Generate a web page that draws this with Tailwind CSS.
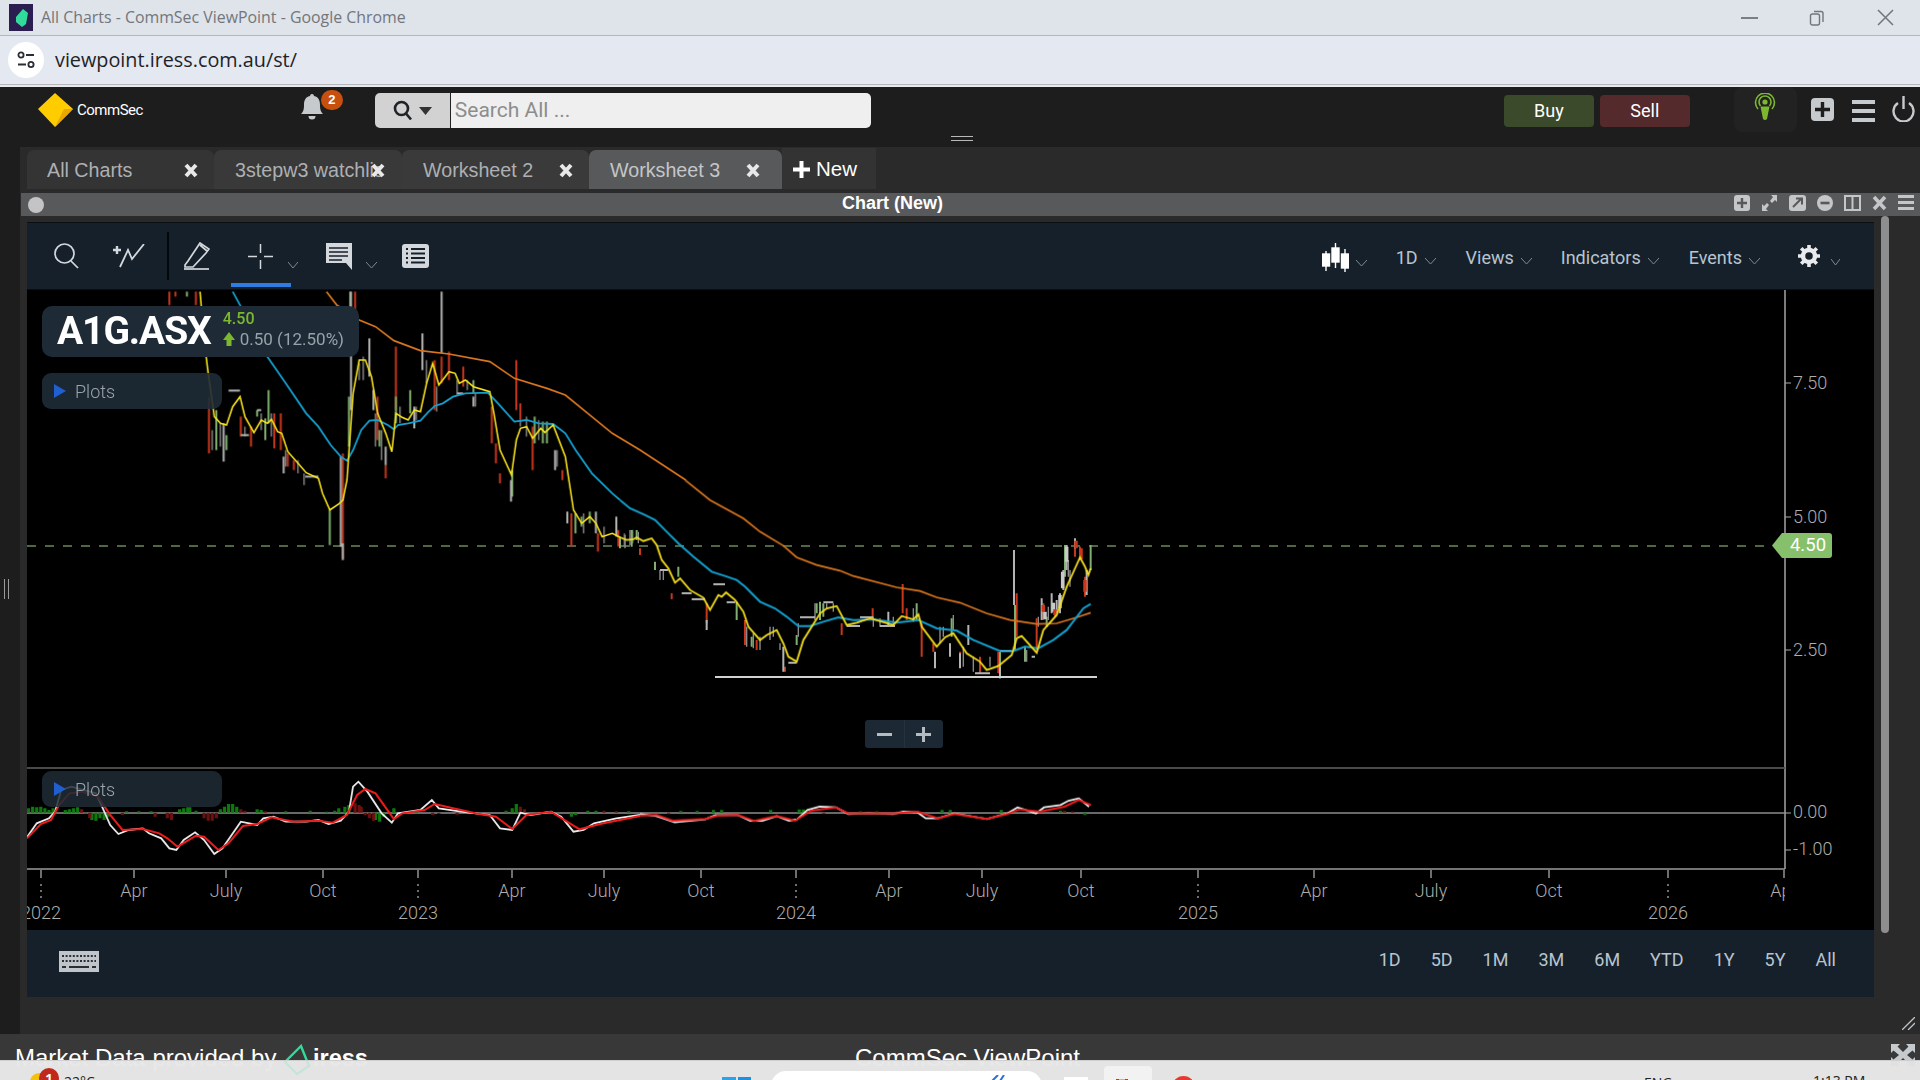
<!DOCTYPE html>
<html>
<head>
<meta charset="utf-8">
<script src="https://cdn.jsdelivr.net/npm/@tailwindcss/browser@4"></script>
</head>
<body class="bg-[#e4e4e4]">
<div class="w-[1920px] h-[1080px] overflow-hidden flex flex-col relative font-['Liberation_Sans',sans-serif]">

  <!-- Browser title bar -->
  <div class="h-[36px] shrink-0 bg-[#dfe3ea] border-b border-[#b4b6ba] flex items-center relative">
    <div class="ml-[9px] w-[24px] h-[27px] bg-[#2b1d4f] flex items-center justify-center">
      <svg width="16" height="20" viewBox="0 0 16 20"><path d="M10 1 L15 5 L13 16 L9 19 L3 14 L3 9 Z" fill="#2fdc9c"/></svg>
    </div>
    <span class="ml-[8px] text-[#72767c] text-[15.9px] font-['Open_Sans',sans-serif]">All Charts - CommSec ViewPoint - Google Chrome</span>
    <div class="ml-auto flex items-center">
      <div class="w-[17px] h-[2px] bg-[#7b7f85] mr-[51px]"></div>
      <svg class="mr-[52px]" width="16" height="16" viewBox="0 0 16 16" fill="none" stroke="#72767c" stroke-width="1.4"><rect x="1.5" y="4" width="9" height="11" rx="2"/><path d="M5 1.5 H12 a2 2 0 0 1 2 2 V12"/></svg>
      <svg class="mr-[26px]" width="17" height="17" viewBox="0 0 17 17" stroke="#72767c" stroke-width="1.5"><path d="M1 1 L16 16 M16 1 L1 16"/></svg>
    </div>
  </div>

  <!-- Address bar -->
  <div class="h-[48px] shrink-0 bg-[#e3e8f1] flex items-center">
    <div class="ml-[8px] w-[36px] h-[36px] rounded-full bg-white flex items-center justify-center">
      <svg width="20" height="20" viewBox="0 0 20 20" fill="none" stroke="#2a2d33" stroke-width="1.8"><circle cx="5" cy="5" r="2.6"/><path d="M10 5 H18 M2 14.5 H10"/><circle cx="15" cy="14.5" r="2.6"/></svg>
    </div>
    <span class="ml-[11px] text-[#1f2226] text-[19.8px] font-['Open_Sans',sans-serif]">viewpoint.iress.com.au/st/</span>
  </div>
  <div class="h-[3px] shrink-0 bg-[#e6e9ee] border-t border-[#b4b6ba]"></div>

  <!-- App header -->
  <div class="h-[60px] shrink-0 bg-[#1e1d1e] flex items-start relative">
    <svg class="ml-[38px] mt-[6px]" width="35" height="34" viewBox="0 0 35 34"><path d="M17 0 L35 16 L17 34 L0 16 Z" fill="#ffcc00"/><path d="M17 34 L35 16 L26 16 Z" fill="#e8a800"/></svg>
    <span class="ml-[4px] mt-[14px] text-white text-[15px] leading-[18px] font-['Roboto',sans-serif] tracking-[-0.5px]">CommSec</span>
    <div class="relative ml-[158px] mt-[7px] w-[20px] h-[26px]">
      <svg width="22" height="26" viewBox="0 0 22 26" fill="#c6cacd"><path d="M11 0 a2 2 0 0 1 2 2 c5 1 6 5 6 9 c0 5 1 7 3 9 H0 c2-2 3-4 3-9 c0-4 1-8 6-9 a2 2 0 0 1 2-2 Z"/><path d="M7.5 22 a3.5 3.5 0 0 0 7 0 Z"/></svg>
      <span class="absolute left-[20px] top-[-4px] w-[22px] h-[20px] rounded-full bg-[#c8500f] text-white text-[13px] leading-[20px] font-bold text-center">2</span>
    </div>
    <div class="ml-[54px] mt-[6px] w-[496px] h-[35px] flex rounded-[5px] overflow-hidden">
      <div class="w-[76px] bg-[#d2d2d2] border-r border-[#222] flex items-center justify-center gap-[6px]">
        <svg width="20" height="21" viewBox="0 0 20 21" fill="none" stroke="#1f2226" stroke-width="2.6"><circle cx="8.5" cy="8.5" r="6.5"/><path d="M13 13.5 L18 19.5"/></svg>
        <svg width="13" height="8" viewBox="0 0 13 8"><path d="M0 0 H13 L6.5 8 Z" fill="#333"/></svg>
      </div>
      <div class="flex-1 bg-[#efefef] pl-[4px] flex items-center text-[#8d8d8d] text-[21px] font-['Roboto',sans-serif]">Search All ...</div>
    </div>
    <div class="ml-[633px] mt-[8px] w-[90px] h-[32px] rounded-[4px] bg-[#3a4a2a] text-white text-[18px] leading-[31px] text-center font-['Roboto',sans-serif]">Buy</div>
    <div class="ml-[6px] mt-[8px] w-[90px] h-[32px] rounded-[4px] bg-[#542a2c] text-white text-[18px] leading-[31px] text-center font-['Roboto',sans-serif]">Sell</div>
    <div class="ml-[44px] w-[63px] h-[45px] bg-[#222222] rounded-[8px] flex items-start justify-center">
      <svg class="mt-[6px]" width="22" height="28" viewBox="0 0 22 28" fill="none" stroke="#7cb82f" stroke-width="1.6"><path d="M4 16 a9.5 9.5 0 1 1 14 0"/><path d="M6.5 13 a6 6 0 1 1 9 0"/><circle cx="11" cy="9" r="2.6" fill="#7cb82f" stroke="none"/><path d="M6.5 13.5 H15.5 L13 26 Q11 28 9 26 Z" fill="#7cb82f" stroke="none"/></svg>
    </div>
    <svg class="ml-[14px] mt-[11px]" width="23" height="23" viewBox="0 0 23 23"><rect width="23" height="23" rx="4" fill="#c6cacd"/><path d="M11.5 4 V19 M4 11.5 H19" stroke="#1e1d1e" stroke-width="3.4"/></svg>
    <div class="ml-[18px] mt-[13px] w-[23px] flex flex-col gap-[5px]"><div class="h-[4px] bg-[#c6cacd]"></div><div class="h-[4px] bg-[#c6cacd]"></div><div class="h-[4px] bg-[#c6cacd]"></div></div>
    <svg class="ml-[17px] mt-[9px]" width="23" height="26" viewBox="0 0 23 26" fill="none" stroke="#c6cacd" stroke-width="2.4"><path d="M6 7 a10 10 0 1 0 11 0"/><path d="M11.5 0 V13"/></svg>
    <div class="absolute left-[951px] top-[49px] w-[22px] h-[5px] border-y border-[#b9b9b9]"></div>
  </div>

  <!-- Main -->
  <div class="h-[887px] shrink-0 flex">
    <div class="w-[20px] bg-[#1e1d1e] flex items-center justify-start pl-[4px]">
      <div class="w-[5px] h-[20px] border-x border-[#9a9a9a] mb-[4px]"></div>
    </div>
    <div class="flex-1 bg-[#2a2a2a] flex flex-col">
      <!-- Tabs -->
      <div class="h-[42px] shrink-0 flex items-end pl-[7px] text-[#adb0b3] text-[19.7px]">
        <div class="w-[187px] h-[39px] rounded-t-[7px] bg-[#343434] flex items-center pl-[20px] pt-[2px] relative">All Charts
          <svg class="absolute left-[157px] top-[13px]" width="14" height="15" viewBox="0 0 14 15"><path d="M2 2 L12 13 M12 2 L2 13" stroke="#e8e8e8" stroke-width="4"/></svg></div>
        <div class="w-[188px] h-[39px] rounded-t-[7px] bg-[#393939] flex items-center pl-[21px] pt-[2px] relative">
          <span class="w-[146px] overflow-hidden whitespace-nowrap">3stepw3 watchlist</span>
          <svg class="absolute left-[157px] top-[13px]" width="14" height="15" viewBox="0 0 14 15"><path d="M2 2 L12 13 M12 2 L2 13" stroke="#e8e8e8" stroke-width="4"/></svg></div>
        <div class="w-[187px] h-[39px] rounded-t-[7px] bg-[#3a3a3a] flex items-center pl-[21px] pt-[2px] relative">Worksheet 2
          <svg class="absolute left-[157px] top-[13px]" width="14" height="15" viewBox="0 0 14 15"><path d="M2 2 L12 13 M12 2 L2 13" stroke="#e8e8e8" stroke-width="4"/></svg></div>
        <div class="w-[193px] h-[39px] rounded-t-[7px] bg-[#58595b] flex items-center pl-[21px] pt-[2px] relative text-[#c4c6c8]">Worksheet 3
          <svg class="absolute left-[157px] top-[13px]" width="14" height="15" viewBox="0 0 14 15"><path d="M2 2 L12 13 M12 2 L2 13" stroke="#e8e8e8" stroke-width="4"/></svg></div>
        <div class="w-[94px] h-[41px] bg-[#333] flex items-center pl-[11px] pt-[2px] text-white text-[20.5px] gap-[6px]">
          <svg width="17" height="17" viewBox="0 0 17 17"><path d="M8.5 0 V17 M0 8.5 H17" stroke="#fff" stroke-width="4"/></svg>New</div>
      </div>
      <!-- Title bar -->
      <div class="h-[23px] shrink-0 mt-[4px] ml-[1px] bg-[#58595b] flex items-center relative">
        <div class="ml-[7px] w-[16px] h-[16px] rounded-full bg-[#c4c4c4]"></div>
        <span class="ml-[798px] text-white font-bold text-[18px] mb-[3px]">Chart (New)</span>
        <div class="ml-auto mb-[4px] mr-[6px] flex items-center gap-[11px]">
          <svg width="16" height="16" viewBox="0 0 16 16"><rect width="16" height="16" rx="3" fill="#c4c6c8"/><path d="M8 3 V13 M3 8 H13" stroke="#58595b" stroke-width="2.4"/></svg>
          <svg width="17" height="16" viewBox="0 0 17 16" fill="#c4c6c8"><path d="M16 0 H10 L12 2 L9 6 L11 8 L14 5 L16 7 Z M1 16 H7 L5 14 L8 10 L6 8 L3 11 L1 9 Z"/></svg>
          <svg width="17" height="16" viewBox="0 0 17 16"><rect width="17" height="16" rx="3" fill="#c4c6c8"/><path d="M4 12 L12 4 M7 3.5 H13 V9.5" stroke="#58595b" stroke-width="2" fill="none"/></svg>
          <svg width="16" height="16" viewBox="0 0 16 16"><circle cx="8" cy="8" r="8" fill="#c4c6c8"/><path d="M3.5 8 H12.5" stroke="#58595b" stroke-width="2.6"/></svg>
          <svg width="17" height="16" viewBox="0 0 17 16" fill="none" stroke="#c4c6c8" stroke-width="2"><rect x="1" y="1" width="15" height="14"/><path d="M8.5 1 V15"/></svg>
          <svg width="15" height="16" viewBox="0 0 15 16"><path d="M2 2 L13 14 M13 2 L2 14" stroke="#c4c6c8" stroke-width="3.6"/></svg>
          <div class="w-[16px] flex flex-col gap-[3px]"><div class="h-[3px] bg-[#c4c6c8]"></div><div class="h-[3px] bg-[#c4c6c8]"></div><div class="h-[3px] bg-[#c4c6c8]"></div></div>
        </div>
      </div>

      <!-- Chart widget + scrollbar -->
      <div class="flex-1 flex relative">
        <div class="ml-[7px] mt-[6px] w-[1847px] flex flex-col">
          <!-- Toolbar -->
          <div class="h-[68px] shrink-0 bg-[#16202a] border-y border-[#0a0f14] flex items-center justify-between text-[#b8c4d0] text-[18px] font-['Roboto',sans-serif] relative">
            <div class="flex items-center">
              <svg class="ml-[27px]" width="25" height="26" viewBox="0 0 25 26" fill="none" stroke="#d4d8dc" stroke-width="1.7"><circle cx="10.5" cy="10.5" r="9.5"/><path d="M17 18 L24 25"/></svg>
              <svg class="ml-[34px]" width="32" height="24" viewBox="0 0 32 24" fill="none" stroke="#d4d8dc" stroke-width="1.8"><path d="M0 6 H8 M4 2 V10" stroke-width="2.4"/><path d="M7 23 L15 6 L19 15 L31 0"/></svg>
              <div class="ml-[22px] w-[1.5px] h-[48px] bg-[#05080b]"></div>
              <svg class="ml-[15px]" width="26" height="28" viewBox="0 0 26 28" fill="none" stroke="#d4d8dc" stroke-width="1.7"><path d="M1 23 L4 19 L16 1 L25 7 L22 11 L9 25 L1 25 Z M16 3 L23 9"/><path d="M0 27 H25"/></svg>
              <svg class="ml-[38px]" width="25" height="25" viewBox="0 0 25 25" stroke="#d4d8dc" stroke-width="1.5"><path d="M12.5 0 V9 M12.5 16 V25 M0 12.5 H9 M16 12.5 H25"/></svg>
              <svg class="ml-[15px] mt-[18px]" width="10" height="6" viewBox="0 0 10 6" fill="none" stroke="#7d8a96" stroke-width="1"><path d="M0 0 L5 6 L10 0"/></svg>
              <svg class="ml-[28px]" width="26" height="27" viewBox="0 0 26 27"><path d="M0 0 H26 V20 L26 27 L20 20 H0 Z" fill="#d4d8dc"/><path d="M3 5 H22 M3 9 H22 M3 13 H22 M3 17 H16" stroke="#16202a" stroke-width="1.4"/></svg>
              <svg class="ml-[14px] mt-[18px]" width="11" height="6" viewBox="0 0 11 6" fill="none" stroke="#7d8a96" stroke-width="1"><path d="M0 0 L5.5 6 L11 0"/></svg>
              <svg class="ml-[25px]" width="27" height="24" viewBox="0 0 27 24"><rect width="27" height="24" rx="3" fill="#d4d8dc"/><path d="M4 5 H6 M9 5 H23 M4 9.5 H6 M9 9.5 H23 M4 14 H6 M9 14 H23 M4 18.5 H6 M9 18.5 H23" stroke="#16202a" stroke-width="1.8"/></svg>
            </div>
            <div class="absolute left-[204px] bottom-[2px] w-[60px] h-[4px] bg-[#2f7de1]"></div>
            <div class="flex items-center pr-[34px] pt-[2px]">
              <svg width="27" height="29" viewBox="0 0 27 29" stroke="#fff" stroke-width="1.4" fill="#fff"><path d="M4 8 V28 M13.5 0 V25 M23 6 V29" fill="none"/><rect x="0.5" y="11" width="7" height="12"/><rect x="10" y="5" width="7" height="14"/><rect x="19.5" y="11" width="7" height="14"/></svg>
              <svg class="ml-[7px] mt-[12px]" width="11" height="6" viewBox="0 0 11 6" fill="none" stroke="#7d8a96" stroke-width="1"><path d="M0 0 L5.5 6 L11 0"/></svg>
              <span class="ml-[29px]">1D</span>
              <svg class="ml-[7px] mt-[8px]" width="11" height="6" viewBox="0 0 11 6" fill="none" stroke="#7d8a96" stroke-width="1"><path d="M0 0 L5.5 6 L11 0"/></svg>
              <span class="ml-[30px]">Views</span>
              <svg class="ml-[7px] mt-[8px]" width="11" height="6" viewBox="0 0 11 6" fill="none" stroke="#7d8a96" stroke-width="1"><path d="M0 0 L5.5 6 L11 0"/></svg>
              <span class="ml-[29px]">Indicators</span>
              <svg class="ml-[7px] mt-[8px]" width="11" height="6" viewBox="0 0 11 6" fill="none" stroke="#7d8a96" stroke-width="1"><path d="M0 0 L5.5 6 L11 0"/></svg>
              <span class="ml-[30px]">Events</span>
              <svg class="ml-[7px] mt-[8px]" width="11" height="6" viewBox="0 0 11 6" fill="none" stroke="#7d8a96" stroke-width="1"><path d="M0 0 L5.5 6 L11 0"/></svg>
              <svg class="ml-[38px] mb-[3px]" width="22" height="22" viewBox="0 0 22 22" fill="none"><circle cx="11" cy="11" r="6" stroke="#e8eaec" stroke-width="4.5"/><path d="M11 0 V4 M11 18 V22 M0 11 H4 M18 11 H22 M3.2 3.2 L6 6 M16 16 L18.8 18.8 M18.8 3.2 L16 6 M6 16 L3.2 18.8" stroke="#e8eaec" stroke-width="3.6"/></svg>
              <svg class="ml-[11px] mt-[10px]" width="9" height="6" viewBox="0 0 9 6" fill="none" stroke="#7d8a96" stroke-width="1"><path d="M0 0 L4.5 6 L9 0"/></svg>
            </div>
          </div>

          <!-- Chart canvas -->
          <div class="h-[640px] shrink-0 bg-black relative overflow-hidden">
            <svg class="absolute inset-0" width="1847" height="640" viewBox="27 290 1847 640" fill="none">
              <defs><clipPath id="plot"><rect x="27" y="290" width="1758" height="640"/></clipPath></defs>

              <!-- Frame and axes -->
              <g class="font-['Roboto',sans-serif] font-light" font-size="18" fill="#adadad">
                <path d="M1785 290 V869 M27 869 H1785 M27 768 H1785" stroke="#9a9a9a" stroke-width="1.6"/>
                <path d="M27 768 H1785" stroke="#3c3c3c" stroke-width="1.6"/>
                <path d="M27 813 H1785" stroke="#8d8d8d" stroke-width="1.6"/>
                <path d="M1785 383 h6 M1785 517 h6 M1785 650 h6 M1785 813 h6 M1785 850 h6" stroke="#aaa" stroke-width="1.2"/>
                <path d="M41 870 v8 M134 870 v8 M226 870 v8 M323 870 v8 M418 870 v8 M512 870 v8 M604 870 v8 M701 870 v8 M796 870 v8 M889 870 v8 M982 870 v8 M1081 870 v8 M1198 870 v8 M1314 870 v8 M1431 870 v8 M1549 870 v8 M1668 870 v8 M1784 870 v8" stroke="#aaa" stroke-width="1.3"/>
                <path d="M41 884 v14 M418 884 v14 M796 884 v14 M1198 884 v14 M1668 884 v14" stroke="#aaa" stroke-width="1.3" stroke-dasharray="2 4"/>
                <text x="1793" y="389" stroke="none">7.50</text>
                <text x="1793" y="523" stroke="none">5.00</text>
                <text x="1793" y="656" stroke="none">2.50</text>
                <text x="1793" y="818" stroke="none">0.00</text>
                <text x="1793" y="855" stroke="none">-1.00</text>
                <g text-anchor="middle" stroke="none" clip-path="url(#plot)">
                  <text x="134" y="897">Apr</text><text x="226" y="897">July</text><text x="323" y="897">Oct</text>
                  <text x="512" y="897">Apr</text><text x="604" y="897">July</text><text x="701" y="897">Oct</text>
                  <text x="889" y="897">Apr</text><text x="982" y="897">July</text><text x="1081" y="897">Oct</text>
                  <text x="1314" y="897">Apr</text><text x="1431" y="897">July</text><text x="1549" y="897">Oct</text><text x="1784" y="897">Apr</text>
                  <text x="41" y="919">2022</text><text x="418" y="919">2023</text><text x="796" y="919">2024</text><text x="1198" y="919">2025</text><text x="1668" y="919">2026</text>
                </g>
              </g>

              <!-- Last price dashed line -->
              <path d="M27 546 H1772" stroke="#6b8a55" stroke-width="1.5" stroke-dasharray="9 9"/>

              <g class="blur-[0.4px]" stroke-width="1.5">
                <!-- Candles, left part -->
                <g transform="translate(0,280) scale(.40816,.33333)">
                  <path vector-effect="non-scaling-stroke" stroke="#8a8a8a" stroke-width="1.4" d="M520 450V510M540 430V500M600 440V470M640 400V450M665 400V470M700 510V560M730 540V580M745 580V615M890 230V300M880 250V300M920 400V500M935 450V540M980 380V430M1020 380V420M1045 240V310M1070 320V395M1120 300V345M1145 300V330M1165 340V380M1275 420V440M1290 410V470M1320 420V480M1365 510V560M1430 700V760M1480 740V790M1530 760V800M1550 750V790"/>
                  <path vector-effect="non-scaling-stroke" stroke="#c8371c" stroke-width="2" d="M415 35V75M430 35V50M480 35V75M870 35V90M512 350V520M590 410V470M615 440V500M672 400V505M688 400V510M705 520V560M720 540V570M840 520V835M925 350V480M945 555V595M970 200V390M1065 240V390M1082 230V310M1100 215V300M1135 260V320M1205 380V490M1215 490V550M1225 580V610M1265 240V390M1275 370V420M1305 440V570M1378 570V600M1400 700V800M1465 760V815M1515 750V800"/>
                  <path vector-effect="non-scaling-stroke" stroke="#7fae6e" stroke-width="2" d="M458 35V50M530 390V510M555 465V510M630 390V410M650 415V480M658 330V430M808 690V795M858 35V230M855 350V500M930 450V500M970 350V430M1005 330V400M1160 300V340M1255 570V650M1340 425V490M1310 410V490M1330 425V490M1410 700V760M1425 710V740M1445 695V730"/>
                  <path vector-effect="non-scaling-stroke" stroke="#b4b4b4" stroke-width="2" d="M1082 35V220M548 430V545M695 530V580M860 35V390M835 530V800M840 790V840M905 175V290M1035 160V270M945 500V555M915 330V390M1015 380V445M1160 350V380M1252 600V665M1360 510V570M1390 695V730M1460 695V760M1510 710V770M560 332H588M748 590H780M630 390H640M590 465H610M1120 340H1135"/>
                </g>
                <!-- Candles, right part -->
                <g transform="translate(620,480) scale(.33333)">
                  <path vector-effect="non-scaling-stroke" stroke="#8a8a8a" stroke-width="1.4" d="M15 165V205M30 150V195M55 155V190M120 270V300M130 270V300M380 440V500M400 460V505M420 470V510M450 440V480M460 440V470M480 490V510M535 430V470M585 370V420M620 370V385M640 370V395M760 410V440M780 415V440M820 410V440M880 385V425M960 440V490M970 440V470M1000 405V450M1030 500V560M1060 530V575M1110 530V560M1220 510V545M1255 410V440M1285 380V420M1345 240V290M1350 270V320"/>
                  <path vector-effect="non-scaling-stroke" stroke="#c8371c" stroke-width="2" d="M848 312V400M1190 340V470M905 430V530M1270 370V420M1305 390V410M1250 415V510M940 490V515M375 420V495M410 480V510M260 370V430M155 340V358M60 205V225M495 560V575M665 430V465M758 385V420M860 385V420M1020 515V535M1080 530V580M1135 515V580M1395 290V350M1380 200V240M1365 180V230"/>
                  <path vector-effect="non-scaling-stroke" stroke="#7fae6e" stroke-width="2" d="M1185 375V510M105 245V270M175 260V290M350 365V420M395 470V500M530 465V495M590 370V400M600 365V420M610 370V410M890 370V420M995 415V470M1140 515V595M1412 195V270M1335 195V290M1280 410V440M1215 500V545M35 150V200M50 150V180M0 170V205"/>
                  <path vector-effect="non-scaling-stroke" stroke="#b4b4b4" stroke-width="2" d="M1182 210V375M1045 435V495M990 490V530M945 515V565M1020 520V565M1140 560V595M1330 270V330M1340 195V270M1365 175V205M1295 340V400M1265 355V420M490 500V575M260 420V450M805 395V440M1400 270V345M1320 340V400M1310 360V400M280 313H315M185 340H215M215 358H255M320 367H345M505 548H530M540 412H585M610 367H640M680 438H720M720 412H760M780 438H825M1140 513H1175M1235 530H1245M120 270H145M1065 580H1110"/>
                  <path vector-effect="non-scaling-stroke" stroke="#c9c9c9" stroke-width="3.5" d="M1328 275V325M1340 200V245M1300 368V395M1275 395V418M1320 345V385"/>
                  <path vector-effect="non-scaling-stroke" stroke="#c8371c" stroke-width="3.5" d="M1368 182V205M1395 300V335M1305 388V405M1383 205V238M1270 375V395"/>
                </g>
                <!-- Moving averages -->
                <path d="M715 677 H1097" stroke="#d2d2d2" stroke-width="2.2" />
                <g transform="translate(0,280) scale(.40816,.33333)">
                  <path vector-effect="non-scaling-stroke" stroke="#d9761f" stroke-width="1.7" d="M800 35L825 75L880 120L920 140L965 182L1030 212L1100 222L1200 245L1260 295L1340 325L1385 345L1440 400L1500 460L1568 510L1680 600"/>
                  <path vector-effect="non-scaling-stroke" stroke="#14a0cf" stroke-width="1.8" d="M570 35L590 80L655 230L700 310L750 400L780 440L810 495L835 530L850 542L865 510L885 450L905 422L925 420L950 435L965 448L975 435L1000 430L1030 422L1050 395L1065 378L1085 370L1110 350L1140 340L1195 338L1220 370L1260 425L1290 420L1320 430L1355 432L1385 460L1410 510L1450 580L1500 640L1519 660"/>
                  <path vector-effect="non-scaling-stroke" stroke="#f5e01c" stroke-width="1.6" d="M490 35L500 180L510 280L525 410L540 430L555 435L570 380L588 350L600 410L622 458L640 420L655 430L665 418L680 455L690 460L705 515L730 550L750 578L780 595L790 640L808 690L830 672L840 660L850 600L865 340L880 240L895 240L910 290L925 400L945 460L960 515L970 400L985 412L1000 420L1015 390L1030 395L1045 310L1060 250L1075 315L1100 275L1115 280L1125 310L1140 300L1160 320L1200 335L1210 400L1225 510L1253 585L1265 480L1275 445L1290 440L1305 475L1325 445L1335 458L1355 435L1385 530L1405 690L1425 730L1445 710L1460 730L1475 770L1500 760L1519 772"/>
                </g>
                <g transform="translate(620,480) scale(.33333)">
                  <path vector-effect="non-scaling-stroke" stroke="#d9761f" stroke-width="1.7" d="M195 0L270 60L370 115L420 155L490 197L530 232L590 255L660 272L700 288L830 322L900 333L950 352L1020 368L1100 400L1170 420L1250 432L1310 430L1370 412L1412 398"/>
                  <path vector-effect="non-scaling-stroke" stroke="#14a0cf" stroke-width="2" d="M0 60L30 85L75 105L105 120L140 155L175 190L220 230L275 275L315 288L350 300L375 320L420 365L465 385L500 410L535 438L570 438L610 425L655 412L700 420L760 418L830 428L895 420L950 445L1010 452L1060 480L1140 513L1180 513L1215 500L1255 505L1300 480L1340 450L1390 385L1412 372"/>
                  <path vector-effect="non-scaling-stroke" stroke="#f5e01c" stroke-width="1.8" d="M0 172L20 180L40 178L50 172L70 183L95 175L110 195L125 240L145 265L165 308L180 295L210 330L250 353L270 390L295 345L305 350L318 337L345 360L370 395L385 440L420 480L440 465L470 450L490 490L505 530L530 545L550 480L600 400L620 385L650 378L680 435L710 428L750 415L820 435L845 408L880 418L895 403L905 440L950 500L975 472L1000 460L1040 520L1080 545L1100 570L1135 558L1175 525L1190 475L1205 468L1250 518L1270 450L1310 405L1340 320L1365 265L1380 232L1395 260L1405 285L1412 265"/>
                </g>

                <!-- Oscillator -->
                <g transform="translate(0,750) scale(.40816,.33333)">
                  <path vector-effect="non-scaling-stroke" stroke="#0d7a0d" stroke-width="3.2" d="M70 188V175M80 188V170M90 188V172M100 188V170M110 188V175M120 188V180M130 188V175M160 188V180M170 188V178M180 188V175M190 188V172M225 188V210M235 188V212M245 188V205M255 188V210M265 188V200M310 188V184M340 188V184M370 188V184M440 188V178M450 188V175M460 188V172M465 188V172M480 188V182M540 188V178M550 188V170M560 188V162M570 188V162M580 188V170M630 188V178M640 188V180M700 188V184M760 188V182M800 188V185M820 188V182M830 188V175M845 188V170M855 188V165M920 188V210M930 188V215M940 188V200M965 188V175M1020 188V184M1265 188V162M1255 188V175M1240 188V182M1340 188V184M1440 188V182M1460 188V182M1400 188V200M1410 188V195M1540 188V184"/>
                  <path vector-effect="non-scaling-stroke" stroke="#6d1010" stroke-width="3.2" d="M200 188V178M210 188V190M220 188V205M300 188V195M380 188V200M410 188V205M420 188V210M500 188V205M510 188V212M520 188V212M530 188V205M590 188V178M600 188V182M650 188V184M870 188V160M880 188V165M885 188V170M895 188V195M905 188V205M915 188V212M1060 188V195M1075 188V192M1120 188V194M1275 188V170M1285 188V178M1480 188V182M1510 188V184"/>
                  <path vector-effect="non-scaling-stroke" stroke="#ececec" stroke-width="1.8" d="M66 262L90 220L120 205L135 185L150 120L175 110L235 130L250 170L270 225L290 252L315 240L350 235L365 250L395 265L415 295L432 300L450 270L478 247L500 270L525 312L545 295L590 215L630 225L645 205L670 200L700 215L750 215L780 210L805 222L835 212L855 185L865 110L878 95L900 125L935 190L960 218L975 190L1030 180L1058 150L1075 175L1130 185L1200 195L1225 235L1255 240L1275 188L1300 195L1350 185L1375 200L1405 245L1430 240L1455 220L1510 205L1568 195"/>
                  <path vector-effect="non-scaling-stroke" stroke="#ee1c1c" stroke-width="2" d="M66 265L100 222L125 210L145 165L170 130L200 125L240 140L270 195L300 240L350 237L390 250L410 265L435 290L480 257L500 260L535 300L560 280L595 228L630 222L665 202L720 215L780 212L815 218L850 195L875 135L895 117L920 130L965 207L985 190L1040 180L1065 162L1110 175L1165 190L1215 200L1255 237L1290 195L1350 185L1420 238L1470 222L1568 198"/>
                </g>
                <g transform="translate(640,750) scale(.40816,.33333)">
                  <path vector-effect="non-scaling-stroke" stroke="#0d7a0d" stroke-width="3.2" d="M100 188V183M140 188V183M180 188V180M200 188V180M320 188V180M390 188V178M400 188V178M540 188V184M580 188V184M740 188V180M760 188V180M885 188V180M1030 188V182M1090 188V195"/>
                  <path vector-effect="non-scaling-stroke" stroke="#6d1010" stroke-width="3.2" d="M1040 188V182M1060 188V184M70 188V192M450 188V192"/>
                  <path vector-effect="non-scaling-stroke" stroke="#ececec" stroke-width="1.8" d="M0 192L40 198L85 217L160 208L185 195L240 195L270 212L300 212L335 198L365 212L385 208L410 180L440 170L480 172L510 192L560 190L620 192L645 185L680 187L700 205L730 205L770 190L850 207L900 190L925 172L970 190L990 172L1030 165L1050 152L1075 145L1100 170"/>
                  <path vector-effect="non-scaling-stroke" stroke="#ee1c1c" stroke-width="2" d="M0 197L40 195L80 212L160 207L190 197L240 195L280 213L335 198L380 212L420 182L480 172L510 190L620 190L680 185L730 205L770 192L850 207L900 192L930 178L980 185L1040 170L1075 150L1105 165"/>
                </g>
              </g>
            </svg>

            <!-- Symbol badge -->
            <div class="absolute left-[15px] top-[16px] w-[317px] h-[51px] rounded-[10px] bg-[#1e2b36] flex items-center font-['Roboto',sans-serif]">
              <span class="ml-[15px] text-white font-bold text-[39px] leading-none tracking-[-1.1px]">A1G.ASX</span>
              <div class="ml-[12px] flex flex-col mb-[6px]">
                <span class="text-[#7cb82f] text-[16px] font-medium leading-[20px]">4.50</span>
                <div class="flex items-center gap-[5px] text-[#98a2aa] text-[17px] leading-[20px]">
                  <svg width="12" height="14" viewBox="0 0 12 14"><path d="M6 0 L12 8 H8.5 V14 H3.5 V8 H0 Z" fill="#7cb82f"/></svg>0.50 (12.50%)</div>
              </div>
            </div>
            <div class="absolute left-[15px] top-[83px] w-[180px] h-[36px] rounded-[9px] bg-[#1e2b36]/90 flex items-center pl-[12px] gap-[9px] text-[#9aa4ac] text-[18px] font-light font-['Roboto',sans-serif]">
              <svg width="12" height="14" viewBox="0 0 12 14"><path d="M0 0 L12 7 L0 14 Z" fill="#1f5fd0"/></svg>Plots</div>
            <div class="absolute left-[15px] top-[481px] w-[180px] h-[36px] rounded-[9px] bg-[#1e2b36]/85 flex items-center pl-[12px] gap-[9px] text-[#9aa4ac] text-[18px] font-light font-['Roboto',sans-serif]">
              <svg width="12" height="14" viewBox="0 0 12 14"><path d="M0 0 L12 7 L0 14 Z" fill="#1f5fd0"/></svg>Plots</div>

            <!-- Zoom buttons -->
            <div class="absolute left-[838px] top-[430px] w-[78px] h-[28px] rounded-[3px] bg-[#1c2934] flex">
              <div class="flex-1 border-r border-[#26323c] flex items-center justify-center"><div class="w-[15px] h-[3px] bg-[#b4bcc2]"></div></div>
              <div class="flex-1 flex items-center justify-center"><svg width="15" height="15" viewBox="0 0 15 15"><path d="M7.5 0 V15 M0 7.5 H15" stroke="#b4bcc2" stroke-width="3"/></svg></div>
            </div>

            <!-- Price tag -->
            <div class="absolute left-[1745px] top-[243px] w-[60px] h-[25px] flex">
              <svg width="10" height="25" viewBox="0 0 10 25"><path d="M10 0 V25 L0 12.5 Z" fill="#86c06a"/></svg>
              <div class="flex-1 bg-[#86c06a] rounded-r-[3px] pl-[2px] text-white text-[18.5px] leading-[25px] text-center font-['Roboto',sans-serif]">4.50</div>
            </div>
          </div>

          <!-- Bottom range bar -->
          <div class="h-[67px] shrink-0 bg-[#16202a] flex items-center relative text-[#b8c4d0] text-[18px] font-['Roboto',sans-serif]">
            <svg class="ml-[32px] mb-[5px]" width="40" height="21" viewBox="0 0 40 21"><rect width="40" height="21" fill="#bfc5ca"/><path d="M3 5 H37 M3 10 H37" stroke="#2a2f34" stroke-width="2" stroke-dasharray="2 1.6"/><path d="M3 16 H7 M10 16 H30 M33 16 H37" stroke="#2a2f34" stroke-width="2"/></svg>
            <div class="ml-auto flex items-center mr-[38px] mb-[8px]">
              <span>1D</span><span class="ml-[30px]">5D</span><span class="ml-[30px]">1M</span><span class="ml-[30px]">3M</span><span class="ml-[30px]">6M</span><span class="ml-[30px]">YTD</span><span class="ml-[30px]">1Y</span><span class="ml-[30px]">5Y</span><span class="ml-[30px]">All</span>
            </div>
          </div>
        </div>

        <!-- Scrollbar -->
        <div class="absolute left-[1861px] top-[0px] w-[8px] h-[717px] rounded-full bg-[#8e8e8e]"></div>
        <!-- Resize grip -->
        <svg class="absolute left-[1882px] bottom-[4px]" width="13" height="13" viewBox="0 0 13 13" stroke="#bfc5ca" stroke-width="1.3"><path d="M0 13 L13 0 M6 13 L13 6"/></svg>
      </div>
    </div>
  </div>

  <!-- Footer strip -->
  <div class="h-[26px] shrink-0 bg-[#383838] flex items-start text-white text-[24px] leading-[26px] relative whitespace-nowrap">
    <span class="absolute left-[15px] top-[11px]">Market Data provided by</span>
    <svg class="absolute left-[283px] top-[10px]" width="28" height="32" viewBox="0 0 28 32" fill="none" stroke="#2fdc9c" stroke-width="2.4"><path d="M18 2 L2 18 L14 30 L26 22 Z"/></svg>
    <span class="absolute left-[313px] top-[11px] font-bold text-[23.5px]">iress</span>
    <span class="absolute left-[855px] top-[11px]">CommSec ViewPoint</span>
    <svg class="absolute left-[1891px] top-[10px]" width="24" height="22" viewBox="0 0 24 22" fill="#c6cacd"><path d="M0 0 H9 L6.5 2.5 L12 8 L17.5 2.5 L15 0 H24 V9 L21.5 6.5 L16 11 L21.5 15.5 L24 13 V22 H15 L17.5 19.5 L12 14 L6.5 19.5 L9 22 H0 V13 L2.5 15.5 L8 11 L2.5 6.5 L0 9 Z"/></svg>
  </div>

  <!-- Windows taskbar -->
  <div class="h-[20px] shrink-0 bg-[#e4e4e4]/85 border-t border-[#cfcfcf] relative z-10 overflow-hidden text-[#222] text-[14px] font-['Open_Sans',sans-serif]">
    <div class="absolute left-[30px] top-[12px] w-[18px] h-[18px] rounded-full bg-[#f4c20d]"></div>
    <div class="absolute left-[39px] top-[7px] w-[20px] h-[20px] rounded-full bg-[#c0281c] text-white text-[13px] leading-[20px] text-center font-bold">1</div>
    <span class="absolute left-[64px] top-[10px]">22°C</span>
    <div class="absolute left-[722px] top-[16px] w-[29px] h-[14px] grid grid-cols-2 gap-[2px]"><div class="bg-[#2aa3e8]"></div><div class="bg-[#1f8fe0]"></div></div>
    <div class="absolute left-[771px] top-[10px] w-[271px] h-[30px] rounded-full bg-white"></div>
    <svg class="absolute left-[990px] top-[14px]" width="16" height="6" viewBox="0 0 16 6"><path d="M2 6 L8 0 M10 6 L14 0" stroke="#2f6fcf" stroke-width="2"/></svg>
    <div class="absolute left-[1064px] top-[16px] w-[24px] h-[14px] bg-white"></div>
    <div class="absolute left-[1104px] top-[5px] w-[48px] h-[26px] rounded-t-[4px] bg-[#f2f2f2]"></div>
    <div class="absolute left-[1116px] top-[18px] w-[12px] h-[10px] border-x-[3px] border-[#c8371c] bg-[#c8371c]/40"></div>
    <div class="absolute left-[1172px] top-[15px] w-[23px] h-[23px] rounded-full bg-[#e53a30]"></div>
    <span class="absolute left-[1644px] top-[11px]">ENG</span>
    <span class="absolute left-[1813px] top-[9px]">1:13 PM</span>
  </div>
</div>
</body>
</html>
